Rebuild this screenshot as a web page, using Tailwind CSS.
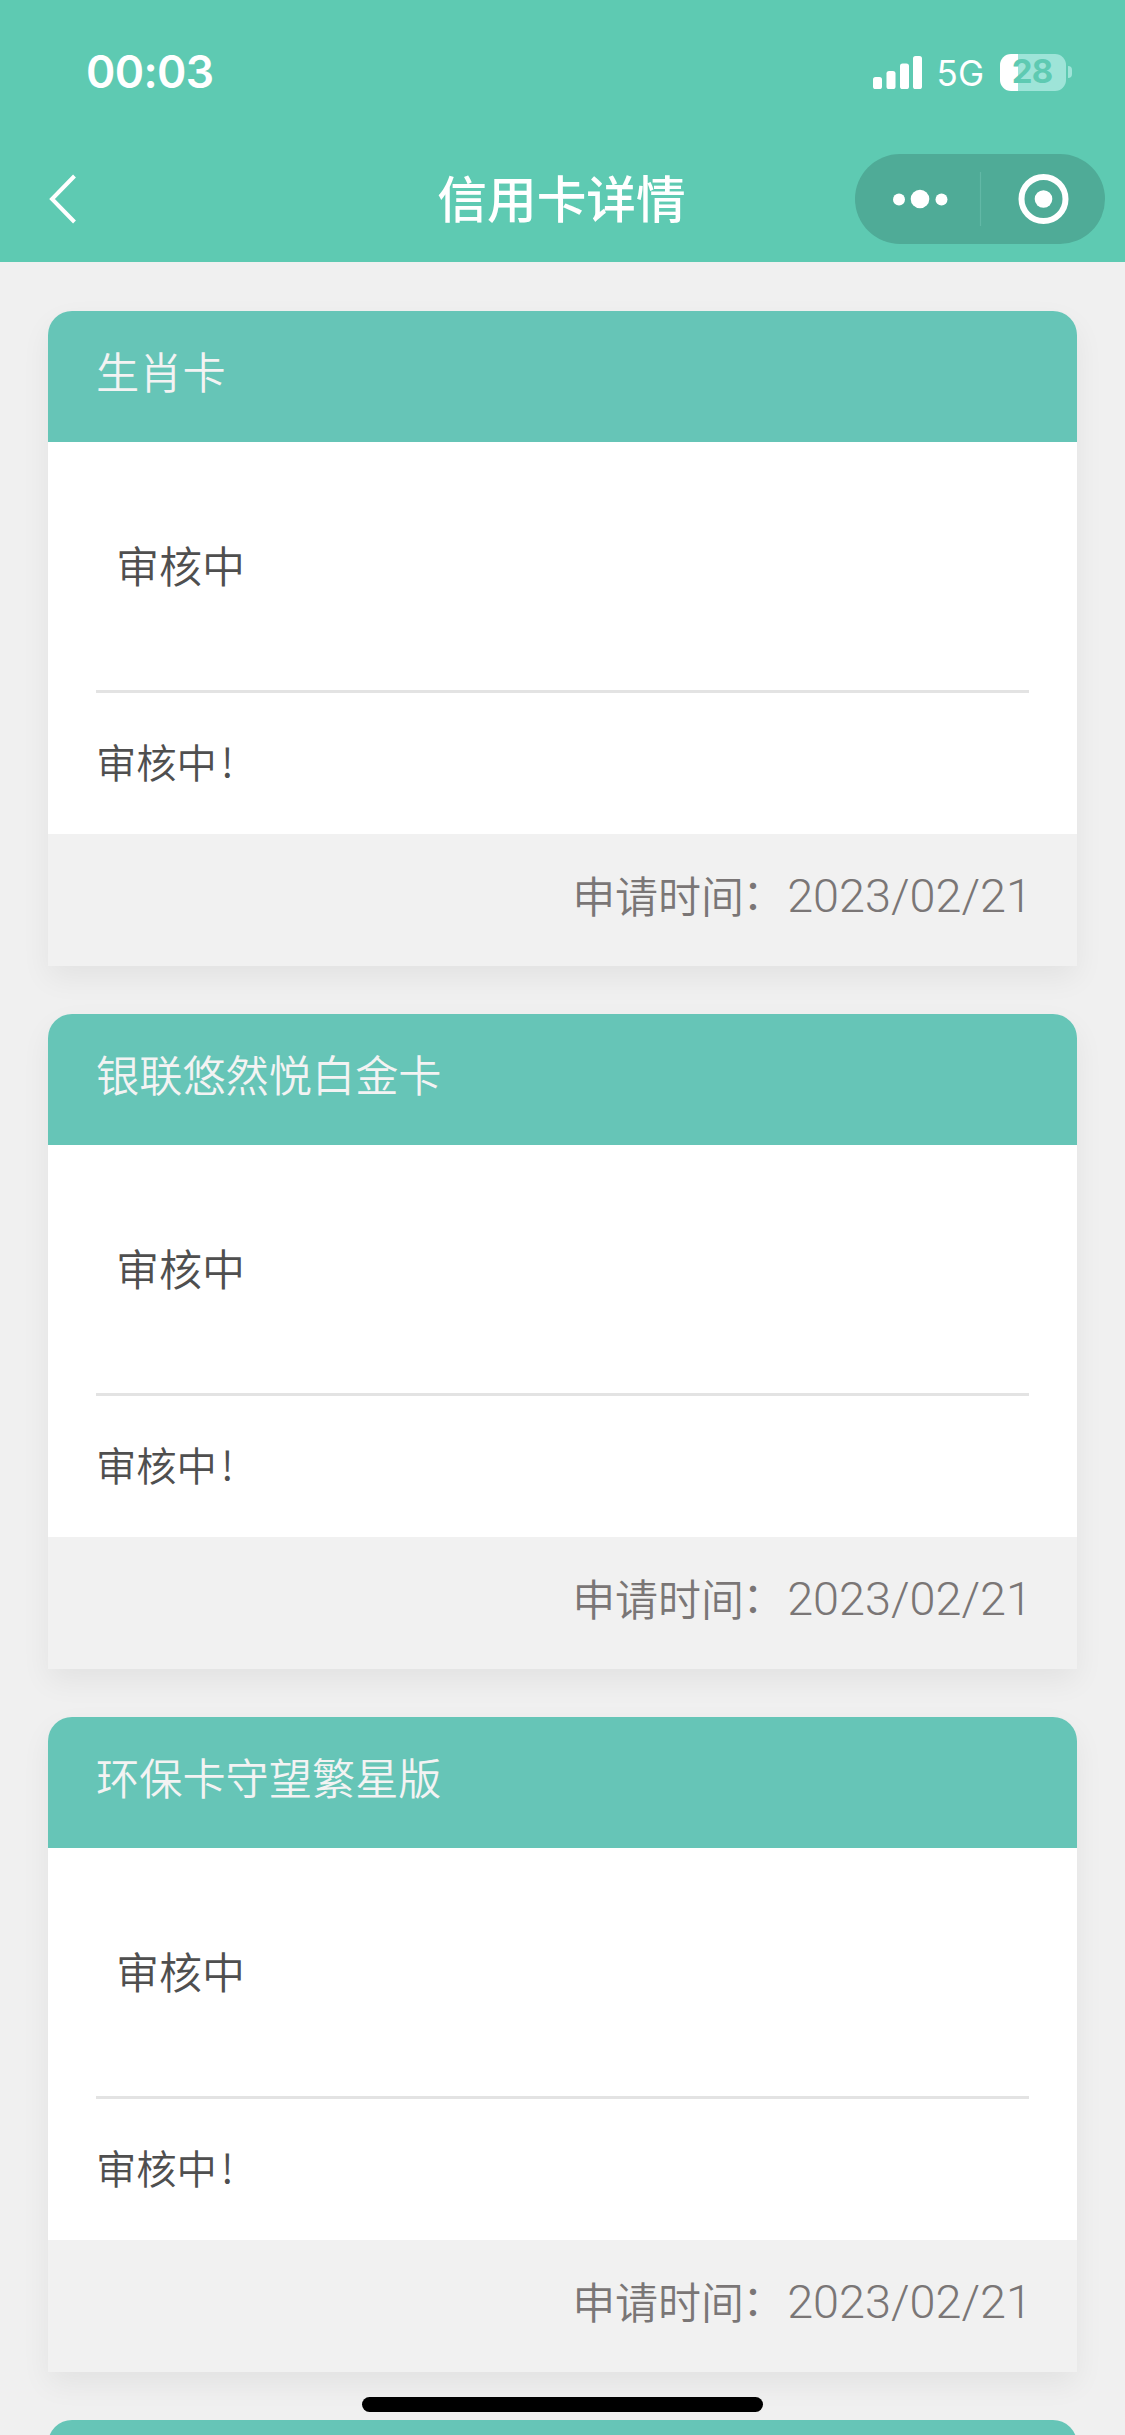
<!DOCTYPE html>
<html lang="zh-CN">
<head>
<meta charset="utf-8">
<title>信用卡详情</title>
<script src="https://cdn.jsdelivr.net/npm/@tailwindcss/browser@4"></script>
</head>
<body class="relative h-[2435px] w-[1125px] overflow-hidden bg-[#f0f0f0] font-['Noto_Sans_CJK_SC',sans-serif]">
<header class="h-[262px] bg-[#5ecab2] text-white">
  <div class="flex h-[144px] items-center justify-between pr-[53px] pl-[86px]">
    <span class="pt-px font-['Inter',sans-serif] text-[44.5px] leading-none font-semibold tracking-[-0.6px]">00:03</span>
    <div class="flex items-center">
      <svg class="mr-[15px] h-[33px] w-[49px]" viewBox="0 0 49 33" fill="currentColor">
        <rect x="0" y="21" width="9" height="12" rx="2.6"/><rect x="13.5" y="15" width="9" height="18" rx="2.6"/><rect x="27" y="7.500" width="9" height="25.500" rx="2.6"/><rect x="40" y="0" width="9" height="33" rx="2.6"/>
      </svg>
      <span class="mr-4 pt-[2px] font-['Inter',sans-serif] text-[35px] leading-none">5G</span>
      <div class="flex h-[37px] w-[66px] items-center justify-center rounded-[11px] bg-[linear-gradient(to_right,white_18px,#9ee4d8_18px)] pr-[2px] pb-[2px] font-['Inter',sans-serif] text-[33px] leading-none font-bold tracking-[-1px] text-[#5ecab2]">28</div>
      <div class="ml-[2px] h-[12px] w-[4px] rounded-r-full bg-[#9ee4d8]"></div>
    </div>
  </div>
  <div class="grid h-[110px] grid-cols-[1fr_auto_1fr] items-center pr-5 pl-5">
    <svg class="ml-[29px] h-[50px] w-[28px]" viewBox="0 0 28 50" fill="none" stroke="currentColor" stroke-width="4"><path d="M25.500 2 3 25l22.500 23"/></svg>
    <h1 class="pr-[2px] pb-[4px] text-[49.700px] leading-none font-medium">信用卡详情</h1>
    <div class="flex h-[90px] w-[250px] items-center justify-self-end rounded-full bg-[#4fab97]">
      <svg class="h-[90px] w-[250px]" viewBox="0 0 250 90" fill="currentColor">
        <circle cx="44" cy="45.500" r="6"/><circle cx="65" cy="45" r="9.300"/><circle cx="86.500" cy="45.500" r="6"/>
        <path d="M125.500 18v54" stroke="#62b8a6" stroke-width="1.200"/>
        <circle cx="188.500" cy="45" r="22" fill="none" stroke="currentColor" stroke-width="6"/><circle cx="188.500" cy="45" r="8.800"/>
      </svg>
    </div>
  </div>
</header>
<main id="cards" class="flex flex-col gap-12 px-12 pt-[49px]"></main>
<div class="absolute top-[2397px] left-[362px] h-[15px] w-[401px] rounded-full bg-black"></div>
<template id="card">
  <section class="h-[655px] shrink-0 rounded-t-[24px] shadow-[0_12px_30px_rgba(0,0,0,0.06)]">
    <h2 class="flex h-[131px] items-center rounded-t-[24px] bg-[#66c5b7] px-12 pb-[11px] text-[43.2px] leading-none font-[350] text-[#f3f3f3]"></h2>
    <div class="h-[392px] bg-white px-12 text-[#4f4f4f]">
      <div class="flex h-[251px] items-center border-b-[3px] border-[#e3e3e3] pb-[3px] pl-5 text-[43px] leading-none font-[350]">审核中</div>
      <div class="flex h-[141px] items-center pb-[5px] text-[40.3px] leading-none font-[350]">审核中<span class="pb-[2px] pl-[4px]">!</span></div>
    </div>
    <div class="flex h-[132px] items-center justify-end bg-[#f1f1f1] pr-[45px] pb-[12px] text-[43px] leading-none font-[350] text-[#7a7676]">申请时间<span class="-translate-x-[2px] -translate-y-[3px]">：</span><span class="pt-[4px] font-['Roboto',sans-serif] text-[46.8px] font-[350]">2023/02/21</span></div>
  </section>
</template>
<script>
const list = document.getElementById('cards'), tpl = document.getElementById('card');
['生肖卡', '银联悠然悦白金卡', '环保卡守望繁星版'].forEach(name => {
  const card = tpl.content.cloneNode(true);
  card.querySelector('h2').textContent = name;
  list.append(card);
});
// Top edge of the next card
const peek = document.createElement('div');
peek.className = 'h-[15px] overflow-hidden';
peek.innerHTML = '<div class="h-[48px] rounded-t-[24px] bg-[#66c5b7]"></div>';
list.append(peek);
</script>
</body>
</html>
